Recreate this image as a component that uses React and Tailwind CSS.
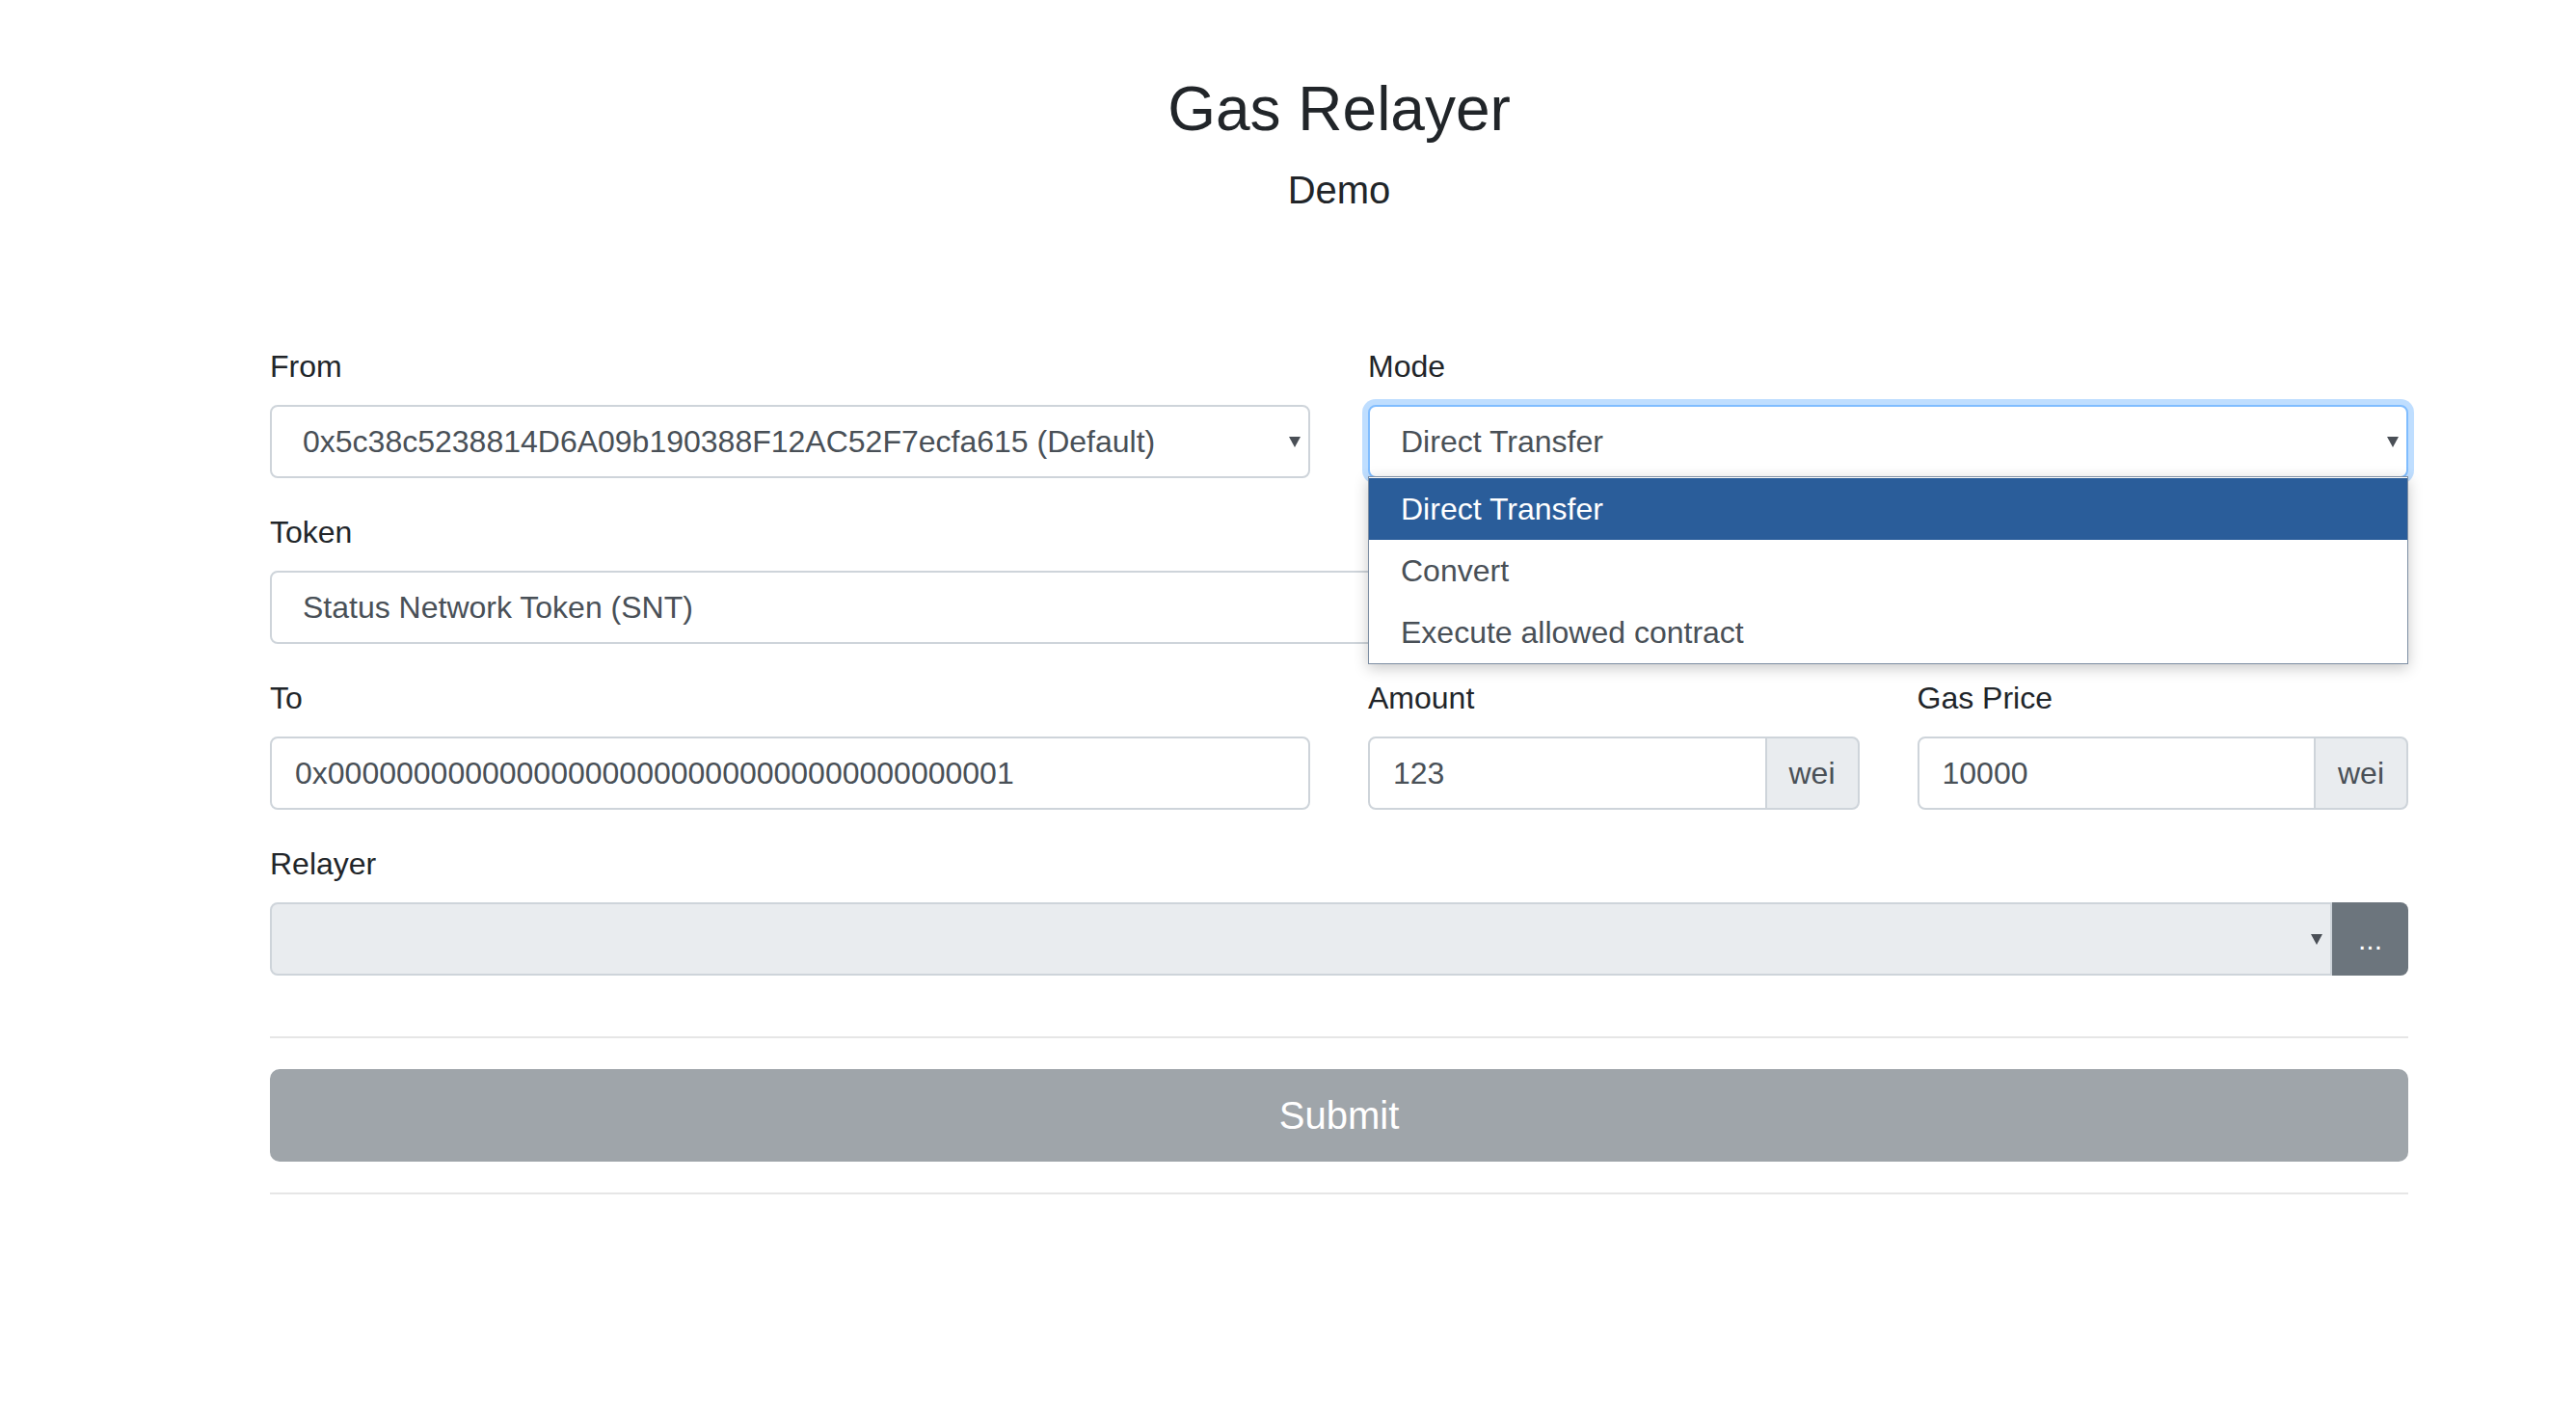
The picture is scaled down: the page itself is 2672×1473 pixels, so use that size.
import React, { useState } from 'react';

const MODES = ['Direct Transfer', 'Convert', 'Execute allowed contract'];

const Caret = () => (
  <svg width="12" height="11" viewBox="0 0 12 11" className="shrink-0">
    <path d="M0 0 L12 0 L6 11 Z" fill="#4a4f56" />
  </svg>
);

const Label = ({ children }) => (
  <label className="block text-[32px] leading-[48px] text-[#212529] mb-[16px]">{children}</label>
);

const SelectBox = ({ value, focused, disabled, className = '' }) => (
  <div
    className={`h-[76px] flex items-center pl-[32px] pr-[8px] border-2 text-[32px] leading-[48px] text-[#495057] ${
      focused
        ? 'border-[#80bdff] shadow-[0_0_0_6px_rgba(0,123,255,0.25)] rounded-[8px]'
        : 'border-[#ced4da]'
    } ${disabled ? 'bg-[#e9ecef]' : 'bg-white'} ${className}`}
  >
    <span className="flex-1 whitespace-nowrap">{value}</span>
    <Caret />
  </div>
);

const TextInput = ({ value, className = 'rounded-[8px]' }) => (
  <div className={`h-[76px] flex items-center px-[24px] border-2 border-[#ced4da] bg-white text-[32px] leading-[48px] text-[#495057] ${className}`}>
    {value}
  </div>
);

const WeiInput = ({ value }) => (
  <div className="flex h-[76px]">
    <TextInput value={value} className="flex-1 rounded-l-[8px]" />
    <div className="w-[98px] -ml-[2px] flex items-center justify-center border-2 border-[#ced4da] bg-[#e9ecef] rounded-r-[8px] text-[32px] text-[#495057]">
      wei
    </div>
  </div>
);

export default function App() {
  const [mode, setMode] = useState(MODES[0]);
  const [open, setOpen] = useState(true);

  return (
    <div className="min-h-screen bg-white font-['Liberation_Sans',Arial,sans-serif] pl-[280px]">
      <div className="w-[2218px]">
        <h2 className="pt-[75px] text-center text-[64px] leading-[77px] text-[#212529] mb-[21px]">Gas Relayer</h2>
        <h5 className="text-center text-[40px] leading-[48px] text-[#212529]">Demo</h5>

        <form className="mt-[135px]" onSubmit={(e) => e.preventDefault()}>
          <div className="grid grid-cols-2 gap-x-[60px]">
            <div className="mb-[32px]">
              <Label>From</Label>
              <SelectBox value="0x5c38c5238814D6A09b190388F12AC52F7ecfa615 (Default)" className="rounded-[8px]" />
            </div>
            <div className="mb-[32px] relative z-10">
              <Label>Mode</Label>
              <div className="relative" onClick={() => setOpen(!open)}>
                <SelectBox value={mode} focused />
                {open && (
                  <ul className="absolute left-0 right-0 top-[74px] pt-[1px] bg-white border border-[#7d8ea3] shadow-[0_4px_14px_rgba(0,0,0,0.22)]">
                    {MODES.map((m) => (
                      <li
                        key={m}
                        onClick={() => setMode(m)}
                        className={`h-[64px] leading-[64px] pl-[33px] text-[32px] ${
                          m === mode ? 'bg-[#2a5d9a] text-white' : 'text-[#495057]'
                        }`}
                      >
                        {m}
                      </li>
                    ))}
                  </ul>
                )}
              </div>
            </div>
          </div>

          <div className="mb-[32px]">
            <Label>Token</Label>
            <SelectBox value="Status Network Token (SNT)" className="rounded-[8px]" />
          </div>

          <div className="grid grid-cols-2 gap-x-[60px]">
            <div className="mb-[32px]">
              <Label>To</Label>
              <TextInput value="0x0000000000000000000000000000000000000001" />
            </div>
            <div className="grid grid-cols-2 gap-x-[60px]">
              <div className="mb-[32px]">
                <Label>Amount</Label>
                <WeiInput value="123" />
              </div>
              <div className="mb-[32px]">
                <Label>Gas Price</Label>
                <WeiInput value="10000" />
              </div>
            </div>
          </div>

          <div>
            <Label>Relayer</Label>
            <div className="flex">
              <SelectBox value="" disabled className="flex-1 rounded-l-[8px]" />
              <button
                type="button"
                className="w-[79px] h-[76px] bg-[#6c757d] text-white text-[30px] rounded-r-[8px] flex items-center justify-center"
              >
                ...
              </button>
            </div>
          </div>

          <hr className="mt-[63px] border-0 h-[2px] bg-[#e6e6e6]" />
          <button
            type="submit"
            disabled
            className="mt-[32px] w-full h-[96px] rounded-[10px] bg-[#9fa5aa] text-white text-[40px]"
          >
            Submit
          </button>
          <hr className="mt-[32px] border-0 h-[2px] bg-[#e6e6e6]" />
        </form>
      </div>
    </div>
  );
}
